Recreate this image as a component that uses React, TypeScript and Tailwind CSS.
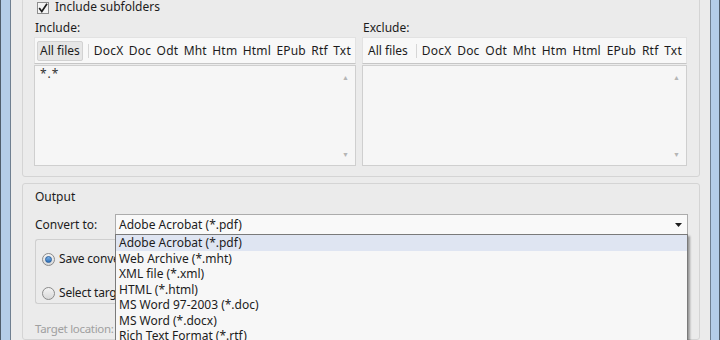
import React from "react";

const tabs = ["DocX", "Doc", "Odt", "Mht", "Htm", "Html", "EPub", "Rtf", "Txt"];

function TabBar({ selected }: { selected?: boolean }) {
  return (
    <div className="h-[27px] bg-[#f8f8f8] border border-[#e2e2e2] border-b-[#c6c6c6] flex items-center pl-[2px] pr-[3px]">
      <div
        className={
          "h-[20px] px-[2px] flex items-center rounded-[2px] border " +
          (selected ? "bg-[#e6e6e6] border-[#d2d2d2]" : "border-transparent")
        }
      >
        All files
      </div>
      <div className="w-px h-[14px] bg-[#d6d6d6] ml-[5px] mr-[5px]" />
      <div className="flex flex-1 justify-between pr-[1px] tracking-[0.2px]">
        {tabs.map((t) => (
          <span key={t}>{t}</span>
        ))}
      </div>
    </div>
  );
}

function ListArea({ content }: { content?: string }) {
  return (
    <div className="relative h-[101px] mt-[1px] bg-[#f6f6f6] border border-[#cfcfcf] px-[5px] py-0">
      {content && <div className="text-[#333] tracking-[1px] leading-[14px] mt-[1px]">{content}</div>}
      <div className="absolute right-[6px] top-[8px] text-[#b5b5b5] text-[7px] leading-none">▲</div>
      <div className="absolute right-[6px] bottom-[7px] text-[#b5b5b5] text-[7px] leading-none">▼</div>
    </div>
  );
}

const options = [
  "Adobe Acrobat (*.pdf)",
  "Web Archive (*.mht)",
  "XML file (*.xml)",
  "HTML (*.html)",
  "MS Word 97-2003 (*.doc)",
  "MS Word (*.docx)",
  "Rich Text Format (*.rtf)",
];

function Radio({ checked }: { checked?: boolean }) {
  return (
    <div className="w-[13px] h-[13px] shrink-0 rounded-full border border-[#8a8a8a] bg-gradient-to-b from-[#f4f4f4] to-[#d8d8d8] flex items-center justify-center">
      {checked && (
        <div className="w-[7px] h-[7px] rounded-full bg-gradient-to-b from-[#7fb4e8] to-[#2c6fb8] border border-[#2a5f9c]" />
      )}
    </div>
  );
}

export default function App() {
  return (
    <div
      className="w-[720px] h-[340px] overflow-hidden flex text-[12px] text-[#1c1c1c] relative"
      style={{ fontFamily: "'Noto Sans', 'Open Sans', sans-serif" }}
    >
      <div className="w-[11px] h-full bg-[#b4cde8] border-l border-l-[#4f5d6b] border-r border-r-[#6f7f90]" />
      <div className="flex-1 h-full bg-[#ebebeb] pl-[11px] pr-[10px] flex flex-col">
        {/* group box 1 */}
        <div className="mt-[-14px] h-[191px] border border-[#d4d4d4] rounded-[3px] pl-[11px] pr-[12px] shrink-0 flex flex-col">
          <div className="h-[28px] flex items-end pb-[1px] pl-[3px]">
            <div className="w-[12px] h-[12px] border border-[#8e8e8e] bg-[#f4f4f4] flex items-center justify-center mr-[6px]">
              <svg width="10" height="10" viewBox="0 0 10 10">
                <path d="M1.2 5 L3.8 8.5 L9 0.8" stroke="#1e1e1e" strokeWidth="1.7" fill="none" />
              </svg>
            </div>
            <span className="leading-[14px]">Include subfolders</span>
          </div>
          <div className="flex gap-[6px] mt-[4px]">
            <div className="w-[322px] flex flex-col">
              <div className="h-[18px] leading-[18px] pl-[1px]">Include:</div>
              <TabBar selected />
              <ListArea content="*.*" />
            </div>
            <div className="flex-1 flex flex-col">
              <div className="h-[18px] leading-[18px] pl-[1px]">Exclude:</div>
              <TabBar />
              <ListArea />
            </div>
          </div>
        </div>
        {/* output group */}
        <div className="mt-[6px] flex-1 border border-[#d4d4d4] rounded-[3px] pl-[12px] pr-[11px] pt-[4px]">
          <div className="h-[17px] leading-[17px]">Output</div>
          <div className="flex items-center mt-[9px] h-[21px]">
            <div className="w-[80px]">Convert to:</div>
            <div className="flex-1 h-[21px] bg-[#f9f9f9] border border-[#acacac] flex items-center pl-[3px] pr-[5px]">
              <span className="flex-1">Adobe Acrobat (*.pdf)</span>
              <svg width="7" height="4" viewBox="0 0 7 4">
                <path d="M0 0 H7 L3.5 4 Z" fill="#1e1e1e" />
              </svg>
            </div>
          </div>
          <div className="mt-[4px] w-[80px] h-[65px] border border-r-0 border-[#cfcfcf] rounded-l-[3px] pl-[6px] pt-[12px] flex flex-col gap-[20px] whitespace-nowrap">
            <div className="flex items-center gap-[4px] h-[14px]">
              <Radio checked />
              <span className="tracking-[-0.2px]">Save conver</span>
            </div>
            <div className="flex items-center gap-[4px] h-[14px]">
              <Radio />
              <span className="tracking-[-0.2px]">Select targe</span>
            </div>
          </div>
          <div className="mt-[16px] text-[#a0a0a0] text-[11.5px] tracking-[-0.3px] whitespace-nowrap">Target location:</div>
        </div>
      </div>
      <div className="w-[10px] h-full bg-[#b4cde8] border-l border-l-[#6f7f90] border-r border-r-[#4f5d6b]" />

      {/* dropdown popup */}
      <div className="absolute left-[115px] top-[234px] w-[573px] h-[120px] bg-[#f7f7f7] border border-[#7a7a7a] shadow-[2px_2px_2px_rgba(0,0,0,0.35)]">
        {options.map((o, i) => (
          <div
            key={o}
            className={
              "h-[15.5px] leading-[15.5px] pl-[3px] whitespace-nowrap " +
              (i === 0 ? "bg-[#dfe5f2]" : "")
            }
          >
            {o}
          </div>
        ))}
      </div>
    </div>
  );
}
